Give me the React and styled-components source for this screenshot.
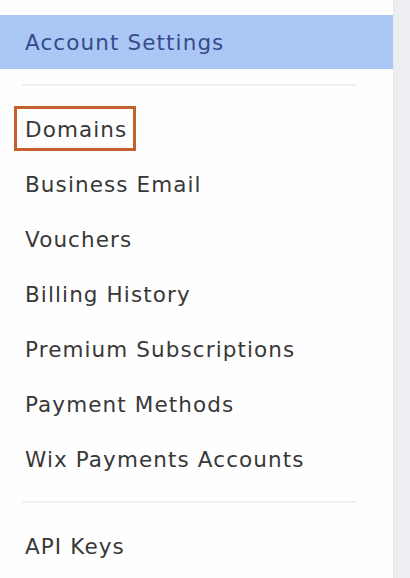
import React from "react";
import styled, { createGlobalStyle } from "styled-components";

const Global = createGlobalStyle`
  html, body { margin: 0; padding: 0; height: 100%; }
  body { background: #ffffff; font-family: "DejaVu Sans", "Noto Sans", Arial, sans-serif; }
  #root { height: 100%; }
`;

const Page = styled.div`
  display: flex;
  height: 578px;
  width: 410px;
  overflow: hidden;
`;

const Panel = styled.nav`
  width: 393px;
  flex: none;
  background: #fefefe;
  padding-top: 15px;
  box-sizing: border-box;
`;

const Strip = styled.div`
  flex: 1;
  background: #eceef1;
  border-left: 1px solid #e6e8eb;
`;

const Header = styled.div`
  height: 54px;
  display: flex;
  align-items: center;
  padding-left: 25px;
  background: #aac7f6;
  color: #374b8b;
  font-size: 21.5px;
  letter-spacing: 1.1px;
`;

const Divider = styled.hr`
  border: none;
  height: 2px;
  background: #eef0f2;
  margin: ${(p) => p.$top}px 37px 0 22px;
`;

const List = styled.ul`
  list-style: none;
  margin: 0;
  padding: 16px 0 0;
`;

const Row = styled.li`
  height: 55px;
  display: flex;
  align-items: center;
  padding-left: 25px;
  color: #383838;
  font-size: 21.5px;
  letter-spacing: 1.1px;
`;

const Label = styled.span`
  position: relative;
  line-height: 26px;
  ${(p) =>
    p.$marked &&
    `
    &::after {
      content: "";
      position: absolute;
      top: -11px;
      bottom: -8px;
      left: -11px;
      right: -9px;
      border: 3px solid #c2612c;
    }
  `}
`;

const items = [
  "Domains",
  "Business Email",
  "Vouchers",
  "Billing History",
  "Premium Subscriptions",
  "Payment Methods",
  "Wix Payments Accounts",
];

export default function App() {
  return (
    <Page>
      <Global />
      <Panel>
        <Header>Account Settings</Header>
        <Divider $top={15} />
        <List>
          {items.map((t, i) => (
            <Row key={t}>
              <Label $marked={i === 0}>{t}</Label>
            </Row>
          ))}
        </List>
        <Divider $top={14} />
        <List>
          <Row>
            <Label>API Keys</Label>
          </Row>
        </List>
      </Panel>
      <Strip />
    </Page>
  );
}
